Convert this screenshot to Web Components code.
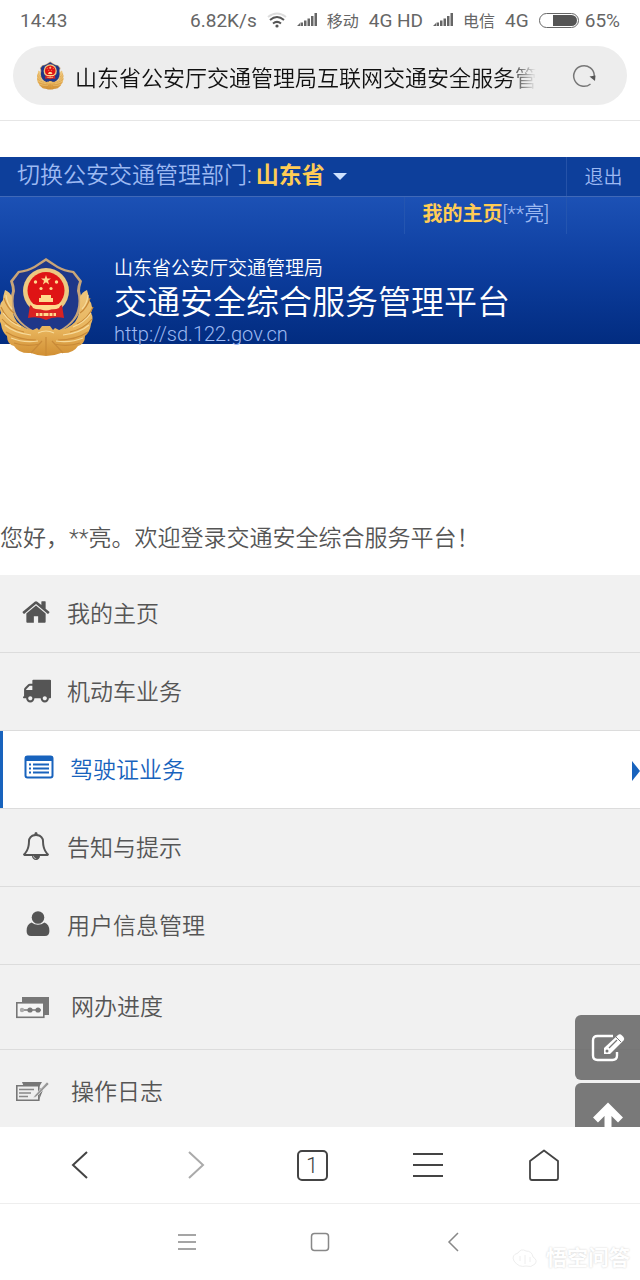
<!DOCTYPE html>
<html lang="zh-CN">
<head>
<meta charset="utf-8">
<meta name="viewport" content="width=device-width,initial-scale=1">
<title>交通安全综合服务管理平台</title>
<style>
body{
    margin: 0;
    background: #fff;
    color: #555;
    font-family: Roboto, "Noto Sans CJK SC", sans-serif;
    font-weight: 350;
}
</style>
</head>
<body>

<phone-screen>
    <status-bar slot="top" time="14:43" speed="6.82K/s" battery="65"></status-bar>
    <address-bar slot="top" value="山东省公安厅交通管理局互联网交通安全服务管理平台"></address-bar>

    <site-header region="山东省" user="**亮">
        <span slot="bureau">山东省公安厅交通管理局</span>
        <span slot="name">交通安全综合服务管理平台</span>
        <span slot="url">http://sd.122.gov.cn</span>
    </site-header>
    <site-greeting>您好，**亮。欢迎登录交通安全综合服务平台！</site-greeting>
    <side-menu>
        <menu-item icon="home">我的主页</menu-item>
        <menu-item icon="truck">机动车业务</menu-item>
        <menu-item icon="list" active>驾驶证业务</menu-item>
        <menu-item icon="bell">告知与提示</menu-item>
        <menu-item icon="user">用户信息管理</menu-item>
        <menu-item icon="progress" tall>网办进度</menu-item>
        <menu-item icon="log" tall>操作日志</menu-item>
    </side-menu>

    <float-tools slot="float"></float-tools>
    <browser-toolbar slot="bottom" tabs="1"></browser-toolbar>
    <system-nav slot="bottom"><span>悟空问答</span></system-nav>
</phone-screen>

<script>
const ICONS = {
    home: `<svg width="30" height="30" viewBox="0 0 1792 1792" fill="currentColor"><path d="M1472 992v480q0 26-19 45t-45 19h-384v-384h-256v384h-384q-26 0-45-19t-19-45v-480q0-1 .5-3t.5-3l575-474 575 474q1 2 1 6zm223-69l-62 74q-8 9-21 11h-3q-13 0-21-7l-692-577-692 577q-12 8-24 7-13-2-21-11l-62-74q-8-10-7-23.5t11-21.5l719-599q32-26 76-26t76 26l244 204v-195q0-14 9-23t23-9h192q14 0 23 9t9 23v408l219 182q10 8 11 21.5t-7 23.5z"/></svg>`,
    truck: `<svg width="29" height="30" viewBox="0 0 1792 1792" fill="currentColor"><path d="M640 1408q0-52-38-90t-90-38-90 38-38 90 38 90 90 38 90-38 38-90zm-384-512h384v-256h-158q-13 0-22 9l-195 195q-9 9-9 22v30zm1280 512q0-52-38-90t-90-38-90 38-38 90 38 90 90 38 90-38 38-90zm256-1088v1024q0 15-4 26.5t-13.5 18.5-16.5 11.5-23.5 6-22.5 2-25.5 0-22.5-.5q0 106-75 181t-181 75-181-75-75-181h-384q0 106-75 181t-181 75-181-75-75-181h-64q-3 0-22.5.5t-25.5 0-22.5-2-23.5-6-16.5-11.5-13.5-18.5-4-26.5q0-26 19-45t45-19v-320q0-8-.5-35t0-38 2.5-34.5 6.5-37 14-30.5 22.5-30l198-198q19-19 50.5-32t58.5-13h160v-192q0-26 19-45t45-19h1024q26 0 45 19t19 45z"/></svg>`,
    list: `<svg width="30" height="28" viewBox="0 0 30 28" fill="none" stroke="currentColor"><rect x="1.5" y="2.5" width="27" height="21" rx="2" stroke-width="2"/><path d="M1 6V4q0-2 2-2h24q2 0 2 2v3H1z" fill="currentColor" stroke="none"/><path d="M5 10.5h2M5 14.5h2M5 18.5h2M9 10.5h16M9 14.5h16M9 18.5h16" stroke-width="1.8"/></svg>`,
    bell: `<svg width="28" height="30" viewBox="0 0 1792 1792" fill="currentColor"><path d="M912 1696q0-16-16-16-59 0-101.5-42.5t-42.5-101.5q0-16-16-16t-16 16q0 73 51.5 124.5t124.5 51.5q16 0 16-16zm-666-288h1300q-266-300-266-832 0-51-24-105t-69-103-121.5-80.5-169.5-31.5-169.5 31.5-121.5 80.5-69 103-24 105q0 532-266 832zm1482 0q0 52-38 90t-90 38h-448q0 106-75 181t-181 75-181-75-75-181h-448q-52 0-90-38t-38-90q50-42 91-88t85-119.5 74.5-158.5 50-206 19.5-260q0-152 117-282.5t307-158.5q-8-19-8-39 0-40 28-68t68-28 68 28 28 68q0 20-8 39 190 28 307 158.5t117 282.5q0 139 19.5 260t50 206 74.5 158.5 85 119.5 91 88z"/></svg>`,
    user: `<svg width="28" height="28" viewBox="0 0 28 28" fill="currentColor"><circle cx="16" cy="7.500" r="6.300"/><path d="M9.500 12.500q6.500 4.600 13 0 4.900 1.600 4.900 8.500 0 5-4.400 5H9q-4.400 0-4.400-5 0-6.900 4.900-8.500z"/></svg>`,
    progress: `<svg width="33" height="28" viewBox="0 0 33 28"><path d="M6 3h27v18h-5V8H6z" fill="#777"/><rect x=".8" y="8.800" width="27" height="14.500" fill="#f5f5f5" stroke="#777" stroke-width="1.600"/><path d="M4 16h21" stroke="#777" stroke-width="1.500"/><circle cx="6" cy="16" r="2.200" fill="#aaa"/><circle cx="14" cy="16" r="2.600" fill="#777"/><circle cx="22" cy="16" r="2.600" fill="#777"/></svg>`,
    log: `<svg width="33" height="28" viewBox="0 0 33 28"><path d="M6 3h20l-3 5H8zM24 9l3 2-4 10z" fill="#777"/><path d="M.8 6.800h22v14.500H.8z" fill="#eee" stroke="#777" stroke-width="1.600"/><path d="M3 10.500h15M3 14h12M3 17.500h9" stroke="#888" stroke-width="1.300"/><path d="M31 3L19 16l-2 3 3-1L33 5z" fill="#999" stroke="#eee" stroke-width=".6"/></svg>`,
    signal: `<svg width="20" height="14" viewBox="0 0 20 14" fill="#666"><path d="M0 13l3-3v3zM3.500 9.500H6V13H3.500zM7 7.500h2.500V13H7zM10.500 5.500H13V13h-2.500zM14 3h2.500v10H14zM17.500 0H20v13h-2.500z"/></svg>`,
    wifi: `<svg width="20" height="16" viewBox="0 0 20 16" fill="none" stroke-width="2"><path d="M1 5q9-7 18 0" stroke="#ddd"/><path d="M3 8q7-6 14 0M6 11.500q4-3.200 8 0" stroke="#555"/><circle cx="10" cy="14" r="1.600" fill="#555"/></svg>`,
    reload: `<svg width="24" height="24" viewBox="0 0 24 24"><path d="M18.500 20A10.300 10.300 0 1 1 22.300 12" fill="none" stroke="#777" stroke-width="1.500"/><path d="M17.500 12.500l6-1-.5 5.500z" fill="#555"/></svg>`,
    back: `<svg width="30" height="32" viewBox="0 0 30 32"><path d="M22 3L8 16l14 13" fill="none" stroke="currentColor" stroke-width="2"/></svg>`,
    forward: `<svg width="30" height="32" viewBox="0 0 30 32"><path d="M8 3l14 13L8 29" fill="none" stroke="currentColor" stroke-width="2"/></svg>`,
    lines: `<svg width="32" height="32" viewBox="0 0 32 32"><path d="M1 5h30M1 16h30M1 27h30" stroke="currentColor" stroke-width="2"/></svg>`,
    house: `<svg width="32" height="32" viewBox="0 0 32 32"><path d="M2 12L16 1.500 30 12v17q0 2-2 2H4q-2 0-2-2z" fill="none" stroke="currentColor" stroke-width="1.800" stroke-linejoin="round"/></svg>`,
    edit: `<svg width="34" height="30" viewBox="0 0 34 30" fill="none" stroke="#fff"><path d="M22 3H6.500Q2 3 2 7.500v15Q2 27 6.500 27h15Q26 27 26 22.500V19" stroke-width="2.400"/><path d="M13 21v-6L27 2q2-1.500 4 .5l1.500 1.500q1.500 2 0 3.500L19 21z" fill="#fff" stroke="none"/><path d="M18 15l8-8" stroke="#777" stroke-width="1.200"/><path d="M25 4l5 5" stroke="#777"/><circle cx="16" cy="18" r="1.500" fill="#777" stroke="none"/></svg>`,
    up: `<svg width="34" height="34" viewBox="0 0 34 34" fill="none" stroke="#fff" stroke-width="7"><path d="M17 36V9M4.500 21L17 8.500 29.500 21"/></svg>`,
}

const EMBLEM = `
<svg viewBox="0 0 94 100" width="100%" height="100%">
    <defs>
        <linearGradient id="gold" x1="0" y1="0" x2="0" y2="1">
            <stop offset="0" stop-color="#edc67c"/>
            <stop offset=".6" stop-color="#e8b45c"/>
            <stop offset="1" stop-color="#d18f33"/>
        </linearGradient>
    </defs>
    <path d="M46 1l12 8q7 4 16 5l8 10q-2 6-2 10 3 10 0 20-6 17-34 27Q18 71 12 54q-3-10 0-20 0-4-2-10l8-10q9-1 16-5z" fill="#c9a578"/>
    <path d="M46 4l11 7q7 4 15.500 5l6.500 8.500q-2 5-2 9.500 3 10 0 20-5 16-31 25-26-9-31-25-3-10 0-20 0-4.500-2-9.500L19.500 16q8.500-1 15.500-5z" fill="#1f3789"/>
    <path d="M5 33q5 2 7 7-1 17 5 25 7 7 16 8l4-2 2 2 3-4h8l3 4 2-2 4 2q9-1 16-8 6-8 5-25 2-5 7-7 2 6 2 10 5 5 2 13 3 5 0 11-1 8-6 12 0 8-7 10-5 8-17 7-7 3-15 3t-15-3q-12 1-17-7-7-2-7-10-5-4-6-12-3-6 0-11-3-8 2-13 0-4 2-10z" fill="url(#gold)"/>
    <circle cx="46" cy="34" r="23" fill="#edc981"/>
    <circle cx="46" cy="33.500" r="18.500" fill="#df1415"/>
    <path d="M30 48q16 10 32 0l2 13q-10-2-18 2-8-4-18-2z" fill="#d92222"/>
    <g fill="#ffd98c">
        <path d="M46 18l1.200 3.500h3.800l-3 2.300 1.100 3.700-3.100-2.200-3.100 2.200 1.100-3.700-3-2.300h3.800z"/>
        <circle cx="35.500" cy="25" r="1.700"/><circle cx="56.500" cy="25" r="1.700"/>
        <circle cx="41" cy="31.500" r="1.600"/><circle cx="51" cy="31.500" r="1.600"/>
        <path d="M41 38h10v3h2v4H39v-4h2z"/>
        <path d="M30 45q3 3 7 3h18q4 0 7-3l-3 6q-4 2-8 1-5 3-10 0-4 1-8-1zM36 56h20v3H36z"/>
    </g>
    <path d="M39 56v3M43 56v3M49 56v3M53 56v3" stroke="#d92222"/>
    <g fill="none" stroke="#c98a38" stroke-width="1.200">
        <path d="M4 41q3 10 10 15M1 50q5 12 16 17M2 62q8 10 22 13M6 75q12 8 30 8M14 86q12 4 26 1M90 41q-3 10-10 15M93 50q-5 12-16 17M92 62q-8 10-22 13M88 75q-12 8-30 8M80 86q-12 4-26 1M46 80v18M42 84L31 96M52 84l11 12"/>
    </g>
    <g fill="none" stroke="#f7db9c" stroke-width="1.200">
        <path d="M6 38q1 9 6 14M3 56q7 10 18 14M5 68q9 8 26 10M11 81q12 5 27 3M88 38q-1 9-6 14M91 56q-7 10-18 14M89 68q-9 8-26 10M83 81q-12 5-27 3M38 76q8-4 16 0"/>
    </g>
</svg>`


class Base extends HTMLElement{
    connectedCallback(){
        this.$ = this.attachShadow({mode:'open'})
        this.$.innerHTML = `<style>*{box-sizing:border-box} button,input{font:inherit;color:inherit;border:0;background:none;padding:0;margin:0} a{color:inherit;text-decoration:none} svg{display:block}</style>${this.html}`
    }
}


class PhoneScreen extends Base{
    get html(){
        return `
        <slot name="top"></slot>
        <main>
            <div id="page"><slot></slot></div>
            <slot name="float"></slot>
        </main>
        <slot name="bottom"></slot>
        <style>
        :host{
            display: flex;
            flex-direction: column;
            height: 100vh;
        }
        main{
            flex: 1;
            min-height: 0;
            position: relative;
            overflow: hidden;
        }
        #page{
            height: 100%;
            overflow-y: auto;
            scrollbar-width: none;
        }
        </style>
        `
    }
}


class StatusBar extends Base{
    get html(){
        return `
        <time>${this.getAttribute('time')}</time>
        <span>${this.getAttribute('speed')}</span>
        ${ICONS.wifi}
        ${ICONS.signal}
        <span class="zh">移动</span>
        <span>4G HD</span>
        ${ICONS.signal}
        <span class="zh">电信</span>
        <span>4G</span>
        <i></i>
        <span>${this.getAttribute('battery')}%</span>
        <style>
        :host{
            display: flex;
            align-items: center;
            gap: 10px;
            height: 40px;
            padding: 0 20px;
            font-size: 19px;
            font-weight: 400;
            color: #666;
        }
        time{
            margin-right: auto;
        }
        .zh{
            font-size: 16px;
        }
        i{
            width: 40px;
            height: 15px;
            padding: 1px;
            border: 1px solid #666;
            border-radius: 8px;
            margin-right: -4px;
        }
        i::before{
            content: "";
            display: block;
            width: ${this.getAttribute('battery')}%;
            height: 100%;
            margin-left: auto;
            background: #555;
            border-radius: 0 6px 6px 0;
        }
        </style>
        `
    }
}


class AddressBar extends Base{
    get html(){
        return `
        <form>
            <span id="favicon">${EMBLEM}</span>
            <input aria-label="地址" value="${this.getAttribute('value')}" readonly>
            <button type="button" aria-label="刷新">${ICONS.reload}</button>
        </form>
        <style>
        :host{
            display: block;
            padding: 6px 13px 15px;
            border-bottom: 1px solid #e6e6e6;
        }
        form{
            display: flex;
            align-items: center;
            height: 59px;
            padding: 0 31px 0 24px;
            background: #ededed;
            border-radius: 30px;
        }
        #favicon{
            width: 27px;
            height: 29px;
            margin-right: 11px;
        }
        input{
            flex: 1;
            min-width: 0;
            height: 34px;
            margin-right: 36px;
            font-size: 22px;
            color: #111;
            outline: 0;
            -webkit-mask-image: linear-gradient(to left, transparent, #000 28px);
            mask-image: linear-gradient(to left, transparent, #000 28px);
        }
        </style>
        `
    }
}


class SiteHeader extends Base{
    get html(){
        return `
        <div id="top">
            <label for="region">切换公安交通管理部门:</label>
            <button id="region">${this.getAttribute('region')}<i></i></button>
            <a id="exit" href="#exit">退出</a>
        </div>
        <nav><a href="#home"><b>我的主页</b>[${this.getAttribute('user')}]</a></nav>
        <div id="brand">
            <div id="logo">${EMBLEM}</div>
            <div>
                <div id="bureau"><slot name="bureau"></slot></div>
                <div id="name"><slot name="name"></slot></div>
                <div id="url"><slot name="url"></slot></div>
            </div>
        </div>
        <style>
        :host{
            display: block;
            margin-top: 36px;
            background: linear-gradient(#1c51b5 40px, #0d3e9f 110px, #022c80);
            color: #9db9f2;
        }
        #top{
            display: flex;
            height: 40px;
            padding-left: 17px;
            line-height: 38px;
            font-size: 23px;
            background: #0d3f9b;
            border-bottom: 1px solid #4069b8;
        }
        #region{
            display: flex;
            align-items: center;
            gap: 8px;
            height: 38px;
            margin-left: 4px;
            font-weight: 700;
            color: #fc5;
        }
        #region i{
            border: 7px solid transparent;
            border-top-color: #cfe2ff;
            border-bottom: 0;
        }
        #exit{
            margin-left: auto;
            width: 74px;
            border-left: 1px solid #2552a8;
            font-size: 19px;
            line-height: 42px;
            text-align: center;
        }
        nav{
            display: flex;
            justify-content: flex-end;
            height: 37px;
            padding-right: 73px;
            line-height: 34px;
            font-size: 20px;
        }
        nav a{
            padding: 0 17px;
            border: solid #2455b0;
            border-width: 0 1px;
        }
        nav b{
            font-weight: 700;
            color: #fc5;
        }
        #brand{
            display: flex;
            gap: 20px;
            padding-top: 23px;
            color: #fff;
        }
        #logo{
            width: 94px;
            height: 100px;
            margin-bottom: -13px;
        }
        #bureau{
            font-size: 19px;
            line-height: 24px;
        }
        #name{
            font-size: 33px;
            line-height: 44px;
        }
        #url{
            font-size: 20px;
            line-height: 19px;
            color: #9db9f2;
        }
        </style>
        `
    }
}


class SiteGreeting extends Base{
    get html(){
        return `
        <slot></slot>
        <style>
        :host{
            display: block;
            padding: 177px 0 18px;
            line-height: 36px;
            font-size: 23px;
            color: #555;
        }
        </style>
        `
    }
}


class SideMenu extends Base{
    get html(){
        return `
        <nav><slot></slot></nav>
        <style>
        :host{
            display: block;
            background: #f1f1f1;
        }
        </style>
        `
    }
}


class MenuItem extends Base{
    get html(){
        return `
        <a href="#${this.getAttribute('icon')}">
            <span id="icon">${ICONS[this.getAttribute('icon')]}</span>
            <slot></slot>
        </a>
        <style>
        :host{
            display: block;
            border-bottom: 1px solid #dcdcdc;
            font-size: 23px;
            line-height: 32px;
            color: #555;
        }
        a{
            display: flex;
            align-items: center;
            gap: 11px;
            padding: 24px 0 21px 16px;
        }
        #icon{
            display: flex;
            justify-content: center;
            align-items: center;
            width: 40px;
            height: 30px;
            margin-bottom: 4px;
            margin-top: -2px;
        }
        :host([active]){
            background: #fff;
            color: #1863bd;
        }
        :host([active]) a{
            border-left: 3px solid #1863bd;
        }
        :host([active]) a::after{
            content: "";
            margin-left: auto;
            border: 10px solid transparent;
            border-left: 8px solid #1863bd;
            border-right: 0;
        }
        :host([tall]) a{
            gap: 15px;
            padding: 27px 0 25px 16px;
        }
        :host([tall]) #icon{
            justify-content: flex-start;
            margin: 0;
        }
        </style>
        `
    }
}


class FloatTools extends Base{
    get html(){
        return `
        <button aria-label="反馈">${ICONS.edit}</button>
        <button aria-label="返回顶部">${ICONS.up}</button>
        <style>
        :host{
            position: absolute;
            right: 0;
            bottom: -21px;
            display: grid;
            gap: 3px;
        }
        button{
            display: grid;
            place-items: center;
            width: 65px;
            height: 65px;
            background: rgba(102, 102, 102, .87);
            border-radius: 6px 0 0 6px;
        }
        </style>
        `
    }
}


class BrowserToolbar extends Base{
    get html(){
        return `
        <button aria-label="后退">${ICONS.back}</button>
        <button aria-label="前进" disabled>${ICONS.forward}</button>
        <button aria-label="标签页"><span>${this.getAttribute('tabs')}</span></button>
        <button aria-label="菜单">${ICONS.lines}</button>
        <button aria-label="主页">${ICONS.house}</button>
        <style>
        :host{
            display: grid;
            grid-template-columns: repeat(5, 1fr);
            height: 76px;
            padding: 0 38px 0 22px;
            border-bottom: 1px solid #eee;
            color: #444;
        }
        button{
            display: grid;
            place-items: center;
        }
        button:disabled{
            color: #aaa;
        }
        span{
            width: 31px;
            height: 31px;
            border: 2px solid #444;
            border-radius: 5px;
            line-height: 27px;
            font-size: 22px;
        }
        </style>
        `
    }
}


class SystemNav extends Base{
    get html(){
        return `
        <button aria-label="最近任务"><svg width="20" height="20"><path d="M1 3h18M1 10h18M1 17h18" stroke="#888" stroke-width="1.500"/></svg></button>
        <button aria-label="桌面"><svg width="20" height="20"><rect x="1.500" y="1.500" width="17" height="17" rx="3" fill="none" stroke="#888" stroke-width="1.500"/></svg></button>
        <button aria-label="返回"><svg width="20" height="20"><path d="M15 1l-9 9 9 9" fill="none" stroke="#888" stroke-width="1.500"/></svg></button>
        <div id="mark">
            <svg width="30" height="24" fill="none" stroke="#eee"><path d="M3 15q-3-6 4-8 3-5 8-2 6 0 7 6 5 3 2 7-4 4-9 2-7 2-12-5zM9 10v5M14 9v9M19 11v5"/></svg>
            <slot></slot>
        </div>
        <style>
        :host{
            position: relative;
            display: grid;
            grid-template-columns: repeat(3, 1fr);
            height: 76px;
            padding: 0 120px;
        }
        button{
            display: grid;
            place-items: center;
        }
        #mark{
            position: absolute;
            right: 10px;
            bottom: 10px;
            display: flex;
            align-items: center;
            gap: 5px;
            line-height: 24px;
            font-size: 21px;
            font-weight: 700;
            color: #fff;
            text-shadow: 0 0 2px #ccc;
        }
        </style>
        `
    }
}


customElements.define('phone-screen', PhoneScreen)
customElements.define('status-bar', StatusBar)
customElements.define('address-bar', AddressBar)
customElements.define('site-header', SiteHeader)
customElements.define('site-greeting', SiteGreeting)
customElements.define('side-menu', SideMenu)
customElements.define('menu-item', MenuItem)
customElements.define('float-tools', FloatTools)
customElements.define('browser-toolbar', BrowserToolbar)
customElements.define('system-nav', SystemNav)
</script>
</body>
</html>
